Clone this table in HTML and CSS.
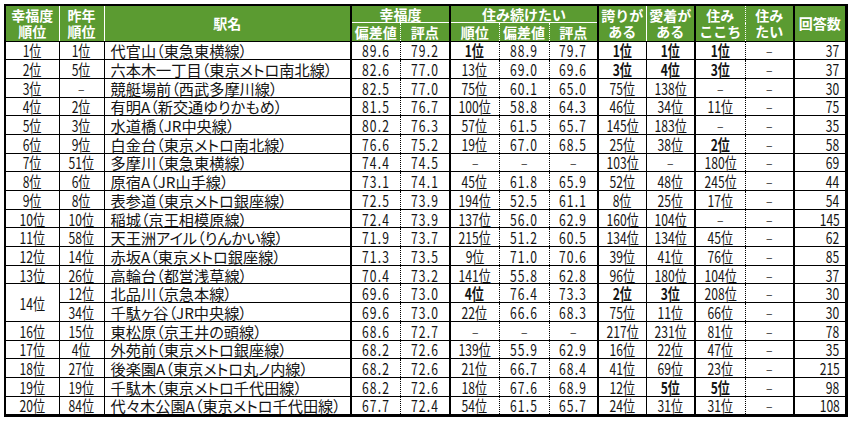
FILE: index.html
```html
<!DOCTYPE html>
<html lang="ja">
<head>
<meta charset="utf-8">
<title>幸福度ランキング</title>
<link rel="stylesheet" href="styles.css">
</head>
<body>
<table class="rank">
<colgroup>
<col class="w1"><col class="w2"><col class="w3"><col class="w4"><col class="w5"><col class="w6"><col class="w7"><col class="w8"><col class="w9"><col class="w10"><col class="w11"><col class="w12"><col class="w13">
</colgroup>
<thead>
<tr class="h1">
<th rowspan="2">幸福度<br>順位</th>
<th rowspan="2">昨年<br>順位</th>
<th rowspan="2">駅名</th>
<th colspan="2" class="g top">幸福度</th>
<th colspan="3" class="g top">住み続けたい</th>
<th rowspan="2" class="g">誇りが<br>ある</th>
<th rowspan="2">愛着が<br>ある</th>
<th rowspan="2" class="g">住み<br>ここち</th>
<th rowspan="2" class="d">住み<br>たい</th>
<th rowspan="2" class="g">回答数</th>
</tr>
<tr class="h2">
<th class="g">偏差値</th><th class="d">評点</th>
<th class="g">順位</th><th class="d">偏差値</th><th class="d">評点</th>
</tr>
</thead>
<tbody>
<tr><td><span>1位</span></td><td><span>1位</span></td><td class="l">代官山（東急東横線）</td><td class="g"><span class="v">89.6</span></td><td class="d"><span class="v">79.2</span></td><td class="g"><span class="b">1位</span></td><td class="d"><span class="v">88.9</span></td><td class="d"><span class="v">79.7</span></td><td class="g"><span class="b">1位</span></td><td><span class="b">1位</span></td><td class="g"><span class="b">1位</span></td><td class="d"><span class="x">–</span></td><td class="g r"><span>37</span></td></tr>
<tr><td><span>2位</span></td><td><span>5位</span></td><td class="l">六本木一丁目（東京メトロ南北線）</td><td class="g"><span class="v">82.6</span></td><td class="d"><span class="v">77.0</span></td><td class="g"><span>13位</span></td><td class="d"><span class="v">69.0</span></td><td class="d"><span class="v">69.6</span></td><td class="g"><span class="b">3位</span></td><td><span class="b">4位</span></td><td class="g"><span class="b">3位</span></td><td class="d"><span class="x">–</span></td><td class="g r"><span>37</span></td></tr>
<tr><td><span>3位</span></td><td><span class="x">–</span></td><td class="l">競艇場前（西武多摩川線）</td><td class="g"><span class="v">82.5</span></td><td class="d"><span class="v">77.0</span></td><td class="g"><span>75位</span></td><td class="d"><span class="v">60.1</span></td><td class="d"><span class="v">65.0</span></td><td class="g"><span>75位</span></td><td><span>138位</span></td><td class="g"><span class="x">–</span></td><td class="d"><span class="x">–</span></td><td class="g r"><span>30</span></td></tr>
<tr><td><span>4位</span></td><td><span>2位</span></td><td class="l">有明A（新交通ゆりかもめ）</td><td class="g"><span class="v">81.5</span></td><td class="d"><span class="v">76.7</span></td><td class="g"><span>100位</span></td><td class="d"><span class="v">58.8</span></td><td class="d"><span class="v">64.3</span></td><td class="g"><span>46位</span></td><td><span>34位</span></td><td class="g"><span>11位</span></td><td class="d"><span class="x">–</span></td><td class="g r"><span>75</span></td></tr>
<tr><td><span>5位</span></td><td><span>3位</span></td><td class="l">水道橋（JR中央線）</td><td class="g"><span class="v">80.2</span></td><td class="d"><span class="v">76.3</span></td><td class="g"><span>57位</span></td><td class="d"><span class="v">61.5</span></td><td class="d"><span class="v">65.7</span></td><td class="g"><span>145位</span></td><td><span>183位</span></td><td class="g"><span class="x">–</span></td><td class="d"><span class="x">–</span></td><td class="g r"><span>35</span></td></tr>
<tr><td><span>6位</span></td><td><span>9位</span></td><td class="l">白金台（東京メトロ南北線）</td><td class="g"><span class="v">76.6</span></td><td class="d"><span class="v">75.2</span></td><td class="g"><span>19位</span></td><td class="d"><span class="v">67.0</span></td><td class="d"><span class="v">68.5</span></td><td class="g"><span>25位</span></td><td><span>38位</span></td><td class="g"><span class="b">2位</span></td><td class="d"><span class="x">–</span></td><td class="g r"><span>58</span></td></tr>
<tr><td><span>7位</span></td><td><span>51位</span></td><td class="l">多摩川（東急東横線）</td><td class="g"><span class="v">74.4</span></td><td class="d"><span class="v">74.5</span></td><td class="g"><span class="x">–</span></td><td class="d"><span class="x">–</span></td><td class="d"><span class="x">–</span></td><td class="g"><span>103位</span></td><td><span class="x">–</span></td><td class="g"><span>180位</span></td><td class="d"><span class="x">–</span></td><td class="g r"><span>69</span></td></tr>
<tr><td><span>8位</span></td><td><span>6位</span></td><td class="l">原宿A（JR山手線）</td><td class="g"><span class="v">73.1</span></td><td class="d"><span class="v">74.1</span></td><td class="g"><span>45位</span></td><td class="d"><span class="v">61.8</span></td><td class="d"><span class="v">65.9</span></td><td class="g"><span>52位</span></td><td><span>48位</span></td><td class="g"><span>245位</span></td><td class="d"><span class="x">–</span></td><td class="g r"><span>44</span></td></tr>
<tr><td><span>9位</span></td><td><span>8位</span></td><td class="l">表参道（東京メトロ銀座線）</td><td class="g"><span class="v">72.5</span></td><td class="d"><span class="v">73.9</span></td><td class="g"><span>194位</span></td><td class="d"><span class="v">52.5</span></td><td class="d"><span class="v">61.1</span></td><td class="g"><span>8位</span></td><td><span>25位</span></td><td class="g"><span>17位</span></td><td class="d"><span class="x">–</span></td><td class="g r"><span>54</span></td></tr>
<tr><td><span>10位</span></td><td><span>10位</span></td><td class="l">稲城（京王相模原線）</td><td class="g"><span class="v">72.4</span></td><td class="d"><span class="v">73.9</span></td><td class="g"><span>137位</span></td><td class="d"><span class="v">56.0</span></td><td class="d"><span class="v">62.9</span></td><td class="g"><span>160位</span></td><td><span>104位</span></td><td class="g"><span class="x">–</span></td><td class="d"><span class="x">–</span></td><td class="g r"><span>145</span></td></tr>
<tr><td><span>11位</span></td><td><span>58位</span></td><td class="l">天王洲アイル（りんかい線）</td><td class="g"><span class="v">71.9</span></td><td class="d"><span class="v">73.7</span></td><td class="g"><span>215位</span></td><td class="d"><span class="v">51.2</span></td><td class="d"><span class="v">60.5</span></td><td class="g"><span>134位</span></td><td><span>134位</span></td><td class="g"><span>45位</span></td><td class="d"><span class="x">–</span></td><td class="g r"><span>62</span></td></tr>
<tr><td><span>12位</span></td><td><span>14位</span></td><td class="l">赤坂A（東京メトロ銀座線）</td><td class="g"><span class="v">71.3</span></td><td class="d"><span class="v">73.5</span></td><td class="g"><span>9位</span></td><td class="d"><span class="v">71.0</span></td><td class="d"><span class="v">70.6</span></td><td class="g"><span>39位</span></td><td><span>41位</span></td><td class="g"><span>76位</span></td><td class="d"><span class="x">–</span></td><td class="g r"><span>85</span></td></tr>
<tr><td><span>13位</span></td><td><span>26位</span></td><td class="l">高輪台（都営浅草線）</td><td class="g"><span class="v">70.4</span></td><td class="d"><span class="v">73.2</span></td><td class="g"><span>141位</span></td><td class="d"><span class="v">55.8</span></td><td class="d"><span class="v">62.8</span></td><td class="g"><span>96位</span></td><td><span>180位</span></td><td class="g"><span>104位</span></td><td class="d"><span class="x">–</span></td><td class="g r"><span>37</span></td></tr>
<tr><td rowspan="2"><span>14位</span></td><td><span>12位</span></td><td class="l">北品川（京急本線）</td><td class="g"><span class="v">69.6</span></td><td class="d"><span class="v">73.0</span></td><td class="g"><span class="b">4位</span></td><td class="d"><span class="v">76.4</span></td><td class="d"><span class="v">73.3</span></td><td class="g"><span class="b">2位</span></td><td><span class="b">3位</span></td><td class="g"><span>208位</span></td><td class="d"><span class="x">–</span></td><td class="g r"><span>30</span></td></tr>
<tr><td><span>34位</span></td><td class="l">千駄ヶ谷（JR中央線）</td><td class="g"><span class="v">69.6</span></td><td class="d"><span class="v">73.0</span></td><td class="g"><span>22位</span></td><td class="d"><span class="v">66.6</span></td><td class="d"><span class="v">68.3</span></td><td class="g"><span>75位</span></td><td><span>11位</span></td><td class="g"><span>66位</span></td><td class="d"><span class="x">–</span></td><td class="g r"><span>30</span></td></tr>
<tr><td><span>16位</span></td><td><span>15位</span></td><td class="l">東松原（京王井の頭線）</td><td class="g"><span class="v">68.6</span></td><td class="d"><span class="v">72.7</span></td><td class="g"><span class="x">–</span></td><td class="d"><span class="x">–</span></td><td class="d"><span class="x">–</span></td><td class="g"><span>217位</span></td><td><span>231位</span></td><td class="g"><span>81位</span></td><td class="d"><span class="x">–</span></td><td class="g r"><span>78</span></td></tr>
<tr><td><span>17位</span></td><td><span>4位</span></td><td class="l">外苑前（東京メトロ銀座線）</td><td class="g"><span class="v">68.2</span></td><td class="d"><span class="v">72.6</span></td><td class="g"><span>139位</span></td><td class="d"><span class="v">55.9</span></td><td class="d"><span class="v">62.9</span></td><td class="g"><span>16位</span></td><td><span>22位</span></td><td class="g"><span>47位</span></td><td class="d"><span class="x">–</span></td><td class="g r"><span>35</span></td></tr>
<tr><td><span>18位</span></td><td><span>27位</span></td><td class="l">後楽園A（東京メトロ丸ノ内線）</td><td class="g"><span class="v">68.2</span></td><td class="d"><span class="v">72.6</span></td><td class="g"><span>21位</span></td><td class="d"><span class="v">66.7</span></td><td class="d"><span class="v">68.4</span></td><td class="g"><span>41位</span></td><td><span>69位</span></td><td class="g"><span>23位</span></td><td class="d"><span class="x">–</span></td><td class="g r"><span>215</span></td></tr>
<tr><td><span>19位</span></td><td><span>19位</span></td><td class="l">千駄木（東京メトロ千代田線）</td><td class="g"><span class="v">68.2</span></td><td class="d"><span class="v">72.6</span></td><td class="g"><span>18位</span></td><td class="d"><span class="v">67.6</span></td><td class="d"><span class="v">68.9</span></td><td class="g"><span>12位</span></td><td><span class="b">5位</span></td><td class="g"><span class="b">5位</span></td><td class="d"><span class="x">–</span></td><td class="g r"><span>98</span></td></tr>
<tr><td><span>20位</span></td><td><span>84位</span></td><td class="l">代々木公園A（東京メトロ千代田線）</td><td class="g"><span class="v">67.7</span></td><td class="d"><span class="v">72.4</span></td><td class="g"><span>54位</span></td><td class="d"><span class="v">61.5</span></td><td class="d"><span class="v">65.7</span></td><td class="g"><span>24位</span></td><td><span>31位</span></td><td class="g"><span>31位</span></td><td class="d"><span class="x">–</span></td><td class="g r"><span>108</span></td></tr>
</tbody>
</table>
</body>
</html>
```

FILE: styles.css
```css
html, body {
  margin: 0;
  padding: 0;
  background: #fff;
}

body {
  font-family: "Noto Sans CJK JP", "Noto Sans", sans-serif;
  color: #141414;
}

.rank {
  border-collapse: collapse;
  table-layout: fixed;
  width: 840px;
  margin: 4px 0 0 4px;
  border-top: 2px solid #000;
  border-left: 2px solid #000;
  border-right: 3px solid #000;
  border-bottom: 3px solid #000;
}

.w1 { width: 54px; }
.w2 { width: 45px; }
.w3 { width: 247px; }
.w4 { width: 49px; }
.w5 { width: 50px; }
.w6 { width: 49px; }
.w7 { width: 50px; }
.w8 { width: 49px; }
.w9 { width: 48px; }
.w10 { width: 49px; }
.w11 { width: 50px; }
.w12 { width: 49px; }
.w13 { width: 52px; }

.rank th {
  background: #5b9b31;
  color: #fff;
  font-weight: bold;
  font-size: 14px;
  line-height: 16px;
  padding: 0;
  text-align: center;
  vertical-align: middle;
  border-left: 1px solid #fff;
  border-bottom: 1px solid #000;
}

.rank .h1 th { height: 16px; }
.rank .h2 th { height: 17.5px; }

.rank th.top { border-bottom: 1px solid #fff; }
.rank th.g { border-left: 2px solid #000; }
.rank th.d { border-left: 1px dotted #fff; }

.rank td {
  height: 17.7px;
  padding: 0;
  font-size: 15.5px;
  line-height: 16px;
  text-align: center;
  vertical-align: middle;
  white-space: nowrap;
  border-left: 1px solid #000;
  border-bottom: 1px solid #000;
}

.rank td.g { border-left: 2px solid #000; }
.rank td.d { border-left: 1px dotted #000; }

.rank td.l {
  text-align: left;
  padding-left: 6px;
  font-size: 15.2px;
  font-feature-settings: "palt";
}

.rank td.r {
  text-align: right;
  padding-right: 5px;
}

.rank td > span {
  display: inline-block;
  transform: scaleX(0.78);
  transform-origin: center center;
}

.rank td.r > span { transform-origin: right center; }

.rank td > span.v { letter-spacing: 1.5px; }
.rank td > span.b { font-weight: bold; }
.rank td > span.x { color: #555; }
```
